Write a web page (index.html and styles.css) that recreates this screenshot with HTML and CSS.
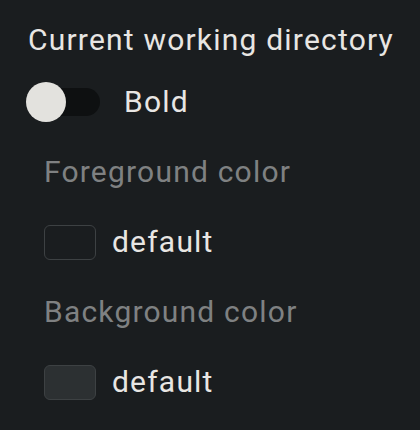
FILE: index.html
```html
<!DOCTYPE html>
<html>
<head>
<meta charset="utf-8">
<link rel="stylesheet" href="styles.css">
</head>
<body>
<div class="panel">
  <div class="title">Current working directory</div>
  <div class="toggle-row">
    <div class="switch"><div class="track"></div><div class="knob"></div></div>
    <span class="toggle-label">Bold</span>
  </div>
  <div class="label">Foreground color</div>
  <div class="swatch-row">
    <div class="swatch"></div>
    <span class="swatch-text">default</span>
  </div>
  <div class="label">Background color</div>
  <div class="swatch-row">
    <div class="swatch filled"></div>
    <span class="swatch-text">default</span>
  </div>
</div>
</body>
</html>
```
FILE: styles.css
```css
html, body {
  margin: 0;
  padding: 0;
  background: #1a1d1f;
}
body {
  font-family: Roboto, "Noto Sans", sans-serif;
  font-size: 30px;
  letter-spacing: 1.2px;
  line-height: 40px;
  color: #e8e6e3;
}
.panel {
  display: flex;
  flex-direction: column;
  padding: 20px 0 0 0;
}
.title {
  padding-left: 28px;
  height: 40px;
  margin-bottom: 22px;
  white-space: nowrap;
}
.toggle-row {
  display: flex;
  align-items: center;
  height: 40px;
  padding-left: 26px;
  margin-bottom: 30px;
}
.switch {
  position: relative;
  width: 74px;
  height: 40px;
  margin-right: 24px;
}
.track {
  position: absolute;
  left: 4px;
  top: 6px;
  width: 70px;
  height: 28px;
  border-radius: 14px;
  background: #0e1011;
}
.knob {
  position: absolute;
  left: 0;
  top: 0;
  width: 40px;
  height: 40px;
  border-radius: 50%;
  background: #e3e2de;
}
.label {
  padding-left: 44px;
  color: #7f8182;
  height: 40px;
  margin-bottom: 30px;
  white-space: nowrap;
}
.swatch-row {
  display: flex;
  align-items: center;
  height: 40px;
  padding-left: 44px;
  margin-bottom: 30px;
}
.swatch {
  box-sizing: border-box;
  width: 52px;
  height: 35px;
  border: 1.5px solid #3d4143;
  border-radius: 6px;
  margin-right: 16px;
}
.swatch.filled {
  background: #2c3032;
}
```
